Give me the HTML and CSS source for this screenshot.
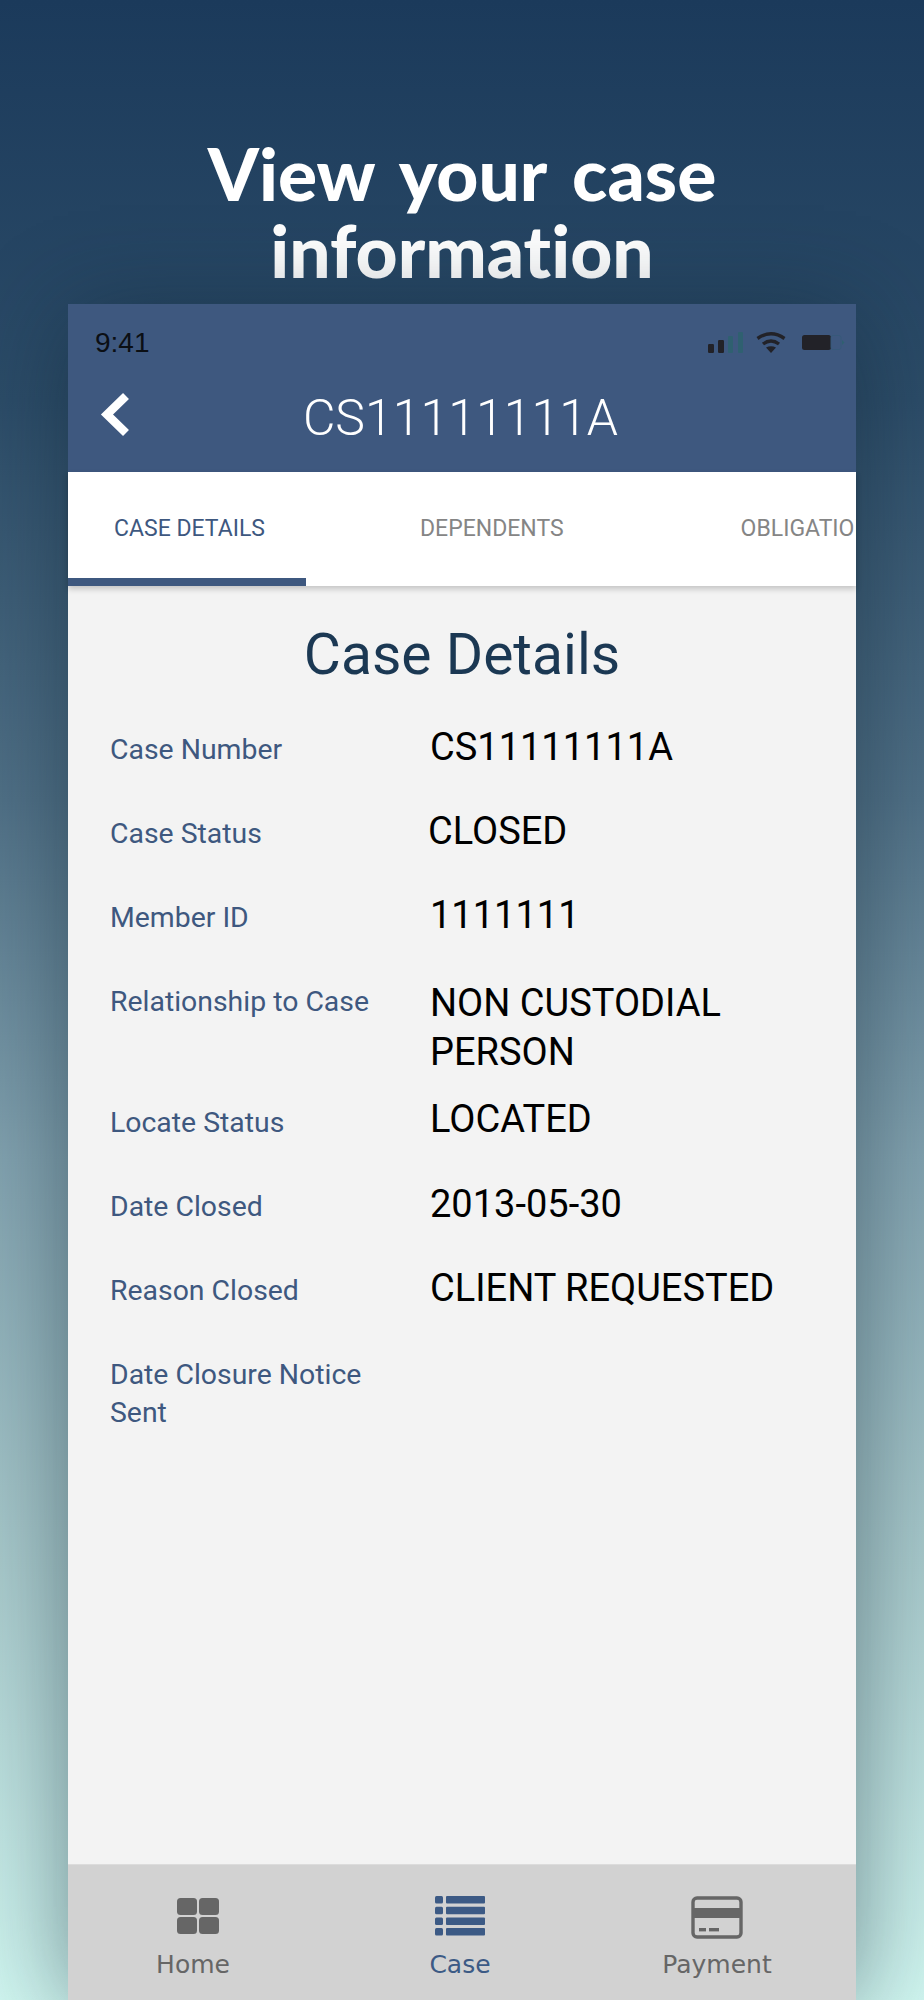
FILE: index.html
```html
<!DOCTYPE html>
<html lang="en">
<head>
<meta charset="utf-8">
<title>View your case information</title>
<link rel="stylesheet" href="styles.css">
</head>
<body>
<main class="screen">
  <h1 class="headline">View your case<br>information</h1>
  <section class="phone">
    <header class="appbar">
      <div class="status">
        <span class="clock">9:41</span>
        <svg class="status-icons" width="140" height="24" viewBox="0 0 140 24" aria-hidden="true">
          <rect x="1" y="12" width="6" height="9" rx="1.2" fill="#222228"/>
          <rect x="11" y="8" width="6" height="13" rx="1.2" fill="#222228"/>
          <rect x="21" y="4" width="5" height="17" rx="1" fill="#2f6070"/>
          <rect x="31" y="0" width="5" height="21" rx="1" fill="#2f6070"/>
          <path d="M50.5 6.5Q64-3 77.500 6.500M56 12Q64 6 72 12" fill="none" stroke="#222228" stroke-width="3.400"/>
          <path d="M59 15.500q5-2.500 10 0l-5 5.500z" fill="#222228"/>
          <rect x="95" y="3" width="29" height="15" rx="2.500" fill="#222228"/>
          <rect x="124" y="3.500" width="10" height="14" rx="2" fill="none" stroke="#37597a" stroke-width="1"/>
          <path d="M135 8l2.500 2.500-2.500 2.500z" fill="#2f6070"/>
        </svg>
      </div>
      <div class="titlebar">
        <svg class="back" width="34" height="46" viewBox="0 0 34 46" aria-hidden="true">
          <path d="M28 5 9 23.500 28 42" fill="none" stroke="#fff" stroke-width="8.500"/>
        </svg>
        <span class="case-id">CS11111111A</span>
      </div>
    </header>
    <nav class="tabs">
      <span class="tab tab-active">CASE DETAILS</span>
      <span class="tab tab-second">DEPENDENTS</span>
      <span class="tab tab-third">OBLIGATIONS</span>
    </nav>
    <div class="content">
      <h2 class="section-title">Case Details</h2>
      <dl class="details">
        <div class="row"><dt>Case Number</dt><dd>CS11111111A</dd></div>
        <div class="row"><dt>Case Status</dt><dd class="nudge">CLOSED</dd></div>
        <div class="row"><dt>Member ID</dt><dd>1111111</dd></div>
        <div class="row row-tall"><dt>Relationship to Case</dt><dd class="lower">NON CUSTODIAL PERSON</dd></div>
        <div class="row"><dt>Locate Status</dt><dd class="raise">LOCATED</dd></div>
        <div class="row"><dt>Date Closed</dt><dd>2013-05-30</dd></div>
        <div class="row"><dt>Reason Closed</dt><dd>CLIENT REQUESTED</dd></div>
        <div class="row"><dt>Date Closure Notice Sent</dt><dd></dd></div>
      </dl>
    </div>
    <footer class="tabbar">
      <div class="tabbar-item">
        <span class="tabbar-icon">
        <svg class="icon-home" width="44" height="40" viewBox="0 0 44 40" aria-hidden="true">
          <rect x="1" y="2" width="20" height="17" rx="3.500" fill="#666"/>
          <rect x="23" y="2" width="20" height="17" rx="3.500" fill="#666"/>
          <rect x="1" y="21" width="20" height="17" rx="3.500" fill="#666"/>
          <rect x="23" y="21" width="20" height="17" rx="3.500" fill="#666"/>
        </svg>
        </span>
        <span>Home</span>
      </div>
      <div class="tabbar-item tabbar-current">
        <span class="tabbar-icon">
        <svg width="52" height="40" viewBox="0 0 52 40" aria-hidden="true">
          <g fill="#3c5a85">
            <rect x="1" y="0" width="8" height="7.500" rx="1.500"/><rect x="12" y="0" width="39" height="7.500" rx="1"/>
            <rect x="1" y="10.700" width="8" height="7.500" rx="1.500"/><rect x="12" y="10.700" width="39" height="7.500" rx="1"/>
            <rect x="1" y="21.400" width="8" height="7.500" rx="1.500"/><rect x="12" y="21.400" width="39" height="7.500" rx="1"/>
            <rect x="1" y="32" width="8" height="7.500" rx="1.500"/><rect x="12" y="32" width="39" height="7.500" rx="1"/>
          </g>
        </svg>
        </span>
        <span>Case</span>
      </div>
      <div class="tabbar-item">
        <span class="tabbar-icon">
        <svg width="52" height="43" viewBox="0 0 52 43" aria-hidden="true">
          <rect x="2" y="2" width="48" height="39" rx="4" fill="none" stroke="#666" stroke-width="3.400"/>
          <rect x="2" y="12" width="48" height="10" fill="#666"/>
          <rect x="8" y="32" width="7" height="3.400" fill="#666"/>
          <rect x="18" y="32" width="10" height="3.400" fill="#666"/>
        </svg>
        </span>
        <span>Payment</span>
      </div>
    </footer>
  </section>
</main>
</body>
</html>
```

FILE: styles.css
```css
* { box-sizing: border-box; }
html, body { margin: 0; padding: 0; }
body { width: 924px; height: 2000px; overflow: hidden; }

.screen {
  height: 2000px;
  padding-top: 135px;
  display: flex;
  flex-direction: column;
  background: linear-gradient(180deg, #1b3a5b 0%, #2c4c68 20%, #507086 40%, #82a2af 58%, #a8c9cb 78%, #d0f6f0 100%);
  overflow: hidden;
}
.headline {
  margin: 0;
  height: 169px;
  color: #fff;
  text-align: center;
  font: 900 73px/77px "Lato", "Liberation Sans", sans-serif;
  font-variant-ligatures: none;
  word-spacing: 9px;
  white-space: nowrap;
}
.phone {
  flex: 1;
  margin: 0 68px;
  display: flex;
  flex-direction: column;
  background: #f3f3f3;
  box-shadow: 0 10px 90px rgba(15, 35, 50, .48);
}
.appbar { height: 168px; background: #3e587f; flex: none; }
.status {
  height: 70px;
  padding: 23px 9px 0 27px;
  display: flex;
  justify-content: space-between;
  align-items: flex-start;
}
.clock { font: 400 28px/32px "Liberation Sans", sans-serif; color: #0b0f14; }
.status-icons { margin-top: 5px; }
.titlebar { position: relative; height: 98px; text-align: center; }
.back { position: absolute; left: 30px; top: 17px; }
.case-id {
  display: block;
  padding-top: 14px;
  padding-right: 3px;
  font: 300 50px/60px "Roboto", sans-serif;
  color: #fff;
}
.tabs {
  flex: none;
  height: 114px;
  display: flex;
  background: #fff;
  overflow: hidden;
  position: relative;
  z-index: 1;
  box-shadow: 0 3px 6px rgba(0, 0, 0, .2);
  font: 400 23px/113px "Roboto", sans-serif;
  color: #858585;
  white-space: nowrap;
}
.tab { flex: none; }
.tab-active {
  width: 238px;
  padding-left: 46px;
  color: #3e587f;
  border-bottom: 8px solid #3e587f;
}
.tab-second { margin-left: 114px; }
.tab-third { margin-left: 177px; }
.content { flex: 1; padding: 34px 42px 0; min-height: 0; }
.section-title {
  margin: 0 0 41px;
  text-align: center;
  font: 400 57px/70px "Roboto", sans-serif;
  color: #1b3853;
}
.details { margin: 0; }
.row {
  display: grid;
  grid-template-columns: 320px 370px;
  min-height: 84px;
  align-items: start;
}
.row-tall { min-height: 121px; }
dt { width: 270px; font: 400 28.400px/38px "Roboto", sans-serif; color: #3e587f; }
dd { margin: -8px 0 0; font: 400 38px/49px "Roboto", sans-serif; color: #000; }
.nudge { margin-left: -2px; margin-top: -8px; }
.lower { margin-top: -4px; width: 300px; }
.raise { margin-top: -9px; }
.tabbar {
  flex: none;
  height: 136px;
  display: grid;
  grid-template-columns: 250px 284px 230px;
  background: #d2d2d2;
  border-top: 1px solid #dcdcdc;
  padding-top: 31px;
}
.tabbar-item {
  display: flex;
  flex-direction: column;
  align-items: center;
  gap: 7px;
  color: #666;
  font: 400 25px/36px "DejaVu Sans", sans-serif;
}
.tabbar-icon { height: 44px; display: flex; align-items: flex-start; }
.icon-home { margin-left: 9px; }
.tabbar-current { color: #3c5a85; }
```
